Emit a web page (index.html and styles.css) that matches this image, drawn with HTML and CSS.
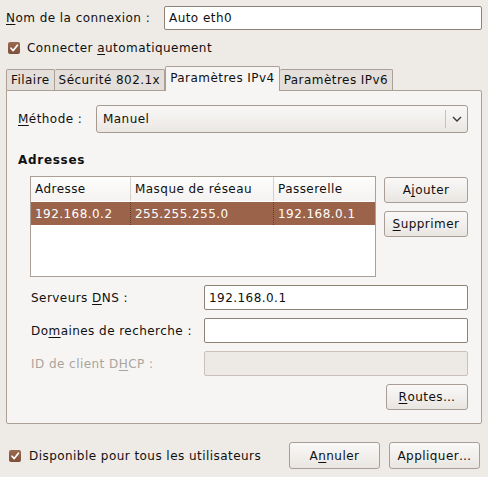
FILE: index.html
```html
<!DOCTYPE html>
<html lang="fr">
<head>
<meta charset="utf-8">
<title>Modification de Auto eth0</title>
<link rel="stylesheet" href="styles.css">
</head>
<body>
<div class="dialog">
  <div class="row-name">
    <label class="lbl-name"><u>N</u>om de la connexion :</label>
    <div class="entry entry-name">Auto eth0</div>
  </div>
  <div class="check-row check-top">
    <span class="checkbox"><svg viewBox="0 0 12 12" width="12" height="12"><path d="M3 6.2 L5.2 8.6 L9.4 3.2" fill="none" stroke="#fff" stroke-width="1.7" stroke-linecap="round" stroke-linejoin="round"/></svg></span>
    <span>Connecter <u>a</u>utomatiquement</span>
  </div>
  <div class="tabs">
    <div class="tab">Filaire</div>
    <div class="tab">Sécurité 802.1x</div>
    <div class="tab active">Paramètres IPv4</div>
    <div class="tab">Paramètres IPv6</div>
  </div>
  <div class="page">
    <div class="method-row">
      <span class="lbl-method"><u>M</u>éthode :</span>
      <div class="combo">
        <span class="combo-text">Manuel</span>
        <span class="combo-sep"></span>
        <span class="combo-arrow"><svg viewBox="0 0 10 6" width="10" height="6"><path d="M1 1 L5 5 L9 1" fill="none" stroke="#3a3a3a" stroke-width="1.4"/></svg></span>
      </div>
    </div>
    <div class="section-title">Adresses</div>
    <div class="addr-area">
      <div class="table">
        <div class="trow thead">
          <div class="cell c1">Adresse</div>
          <div class="cell c2 hsep">Masque de réseau</div>
          <div class="cell c3 hsep">Passerelle</div>
        </div>
        <div class="trow selected">
          <div class="cell c1">192.168.0.2</div>
          <div class="cell c2 dsep">255.255.255.0</div>
          <div class="cell c3 dsep">192.168.0.1</div>
        </div>
      </div>
      <div class="addr-buttons">
        <div class="button btn-side">A<u>j</u>outer</div>
        <div class="button btn-side"><u>S</u>upprimer</div>
      </div>
    </div>
    <div class="form-grid">
      <span class="flabel">Serveurs <u>D</u>NS :</span>
      <div class="entry fentry">192.168.0.1</div>
      <span class="flabel">Do<u>m</u>aines de recherche :</span>
      <div class="entry fentry"></div>
      <span class="flabel disabled">ID de client D<u>H</u>CP :</span>
      <div class="entry fentry entry-disabled"></div>
    </div>
    <div class="routes-row">
      <div class="button btn-routes"><u>R</u>outes…</div>
    </div>
  </div>
  <div class="bottom-row">
    <div class="check-row">
      <span class="checkbox"><svg viewBox="0 0 12 12" width="12" height="12"><path d="M3 6.2 L5.2 8.6 L9.4 3.2" fill="none" stroke="#fff" stroke-width="1.7" stroke-linecap="round" stroke-linejoin="round"/></svg></span>
      <span>Disponible pour tous les utilisateurs</span>
    </div>
    <div class="actions">
      <div class="button btn-action">A<u>n</u>nuler</div>
      <div class="button btn-action">Appliquer…</div>
    </div>
  </div>
</div>
</body>
</html>
```
FILE: styles.css
```css
* { box-sizing: border-box; }
html, body { margin: 0; padding: 0; }
body {
  width: 488px;
  height: 477px;
  background: #eeebe7;
  font-family: "DejaVu Sans", "Liberation Sans", sans-serif;
  font-size: 12px;
  letter-spacing: 0.45px;
  color: #101010;
  overflow: hidden;
}
u { text-decoration: underline; text-underline-offset: 2px; }
.dialog { padding: 6px 6px 0 6px; }

.row-name { display: flex; align-items: center; height: 24px; }
.lbl-name { width: 158px; }
.entry {
  background: #fff;
  border: 1px solid #8e8277;
  border-radius: 2px;
  padding: 0 4px;
  display: flex;
  align-items: center;
  white-space: nowrap;
}
.entry-name { flex: 1; height: 24px; }

.check-row { display: flex; align-items: center; gap: 7px; height: 18px; }
.check-top { margin-top: 9px; padding-left: 2px; }
.checkbox {
  width: 12px; height: 12px;
  border-radius: 2px;
  background: linear-gradient(#9a6a50, #7e4f38);
  border: none;
  display: inline-flex;
  flex: none;
}

.tabs { display: flex; align-items: flex-end; height: 24px; margin-top: 9px; }
.tab {
  height: 21px;
  padding: 0 4px;
  border: 1px solid #aaa096;
  border-bottom: none;
  border-radius: 2px 2px 0 0;
  background: #e4dfda;
  display: flex;
  align-items: center;
  white-space: nowrap;
}
.tab + .tab { border-left: none; }
.tab.active {
  height: 25px;
  margin-bottom: -1px;
  background: #f6f5f3;
  border-left: 1px solid #aaa096;
  position: relative;
  z-index: 1;
  padding-bottom: 3px;
}
.tab.active + .tab { border-left: none; }

.page {
  background: #f6f5f3;
  border: 1px solid #aaa096;
  border-radius: 0 2px 2px 2px;
  padding: 14px 13px 13px 11px;
  width: 476px;
}

.method-row { display: flex; align-items: center; }
.lbl-method { width: 78px; }
.combo {
  flex: 1;
  height: 28px;
  border: 1px solid #a69b91;
  border-radius: 3px;
  background: linear-gradient(#f9f8f7, #ebe7e3);
  display: flex;
  align-items: center;
}
.combo-text { flex: 1; padding-left: 6px; }
.combo-sep { width: 1px; height: 18px; background: #c8c0b9; }
.combo-arrow { width: 21px; display: flex; justify-content: center; align-items: center; }

.section-title { font-weight: bold; margin-top: 19px; line-height: 16px; height: 16px; letter-spacing: 0.7px; }

.addr-area { display: flex; gap: 8px; margin-top: 8px; padding-left: 12px; }
.table {
  width: 346px;
  height: 101px;
  border: 1px solid #aaa096;
  background: #fff;
}
.trow { display: flex; height: 24px; align-items: stretch; }
.thead { background: linear-gradient(#fdfdfc, #f5f3f1); height: 24px; }
.cell { display: flex; align-items: center; padding: 0 4px; white-space: nowrap; }
.c1 { width: 99px; }
.c2 { width: 143px; }
.c3 { flex: 1; }
.hsep { border-left: 1px solid #d6d0ca; }
.selected { background: #9b634a; color: #fff; height: 23px; margin-top: 1px; }
.dsep { border-left: 1px dotted #5e3a2a; }

.addr-buttons { display: flex; flex-direction: column; gap: 8px; margin-top: 1px; }
.button {
  border: 1px solid #a89e95;
  border-radius: 3px;
  background: linear-gradient(#faf9f8, #e9e5e1);
  display: flex;
  align-items: center;
  justify-content: center;
  white-space: nowrap;
}
.btn-side { width: 84px; height: 26px; }

.form-grid {
  display: grid;
  grid-template-columns: 173px 1fr;
  row-gap: 8px;
  margin-top: 8px;
  padding-left: 13px;
  align-items: center;
}
.fentry { height: 25px; }
.entry-disabled { background: #edeae6; border-color: #c9c1ba; }
.disabled { color: #aaa49d; }

.routes-row { display: flex; justify-content: flex-end; margin-top: 8px; }
.btn-routes { width: 82px; height: 26px; }

.bottom-row {
  display: flex;
  align-items: center;
  justify-content: space-between;
  margin-top: 18px;
  padding-left: 3px;
  padding-right: 2px;
}
.bottom-row .check-row { gap: 8px; margin-top: 1px; }
.actions { display: flex; gap: 9px; }
.btn-action { width: 91px; height: 27px; }
```
